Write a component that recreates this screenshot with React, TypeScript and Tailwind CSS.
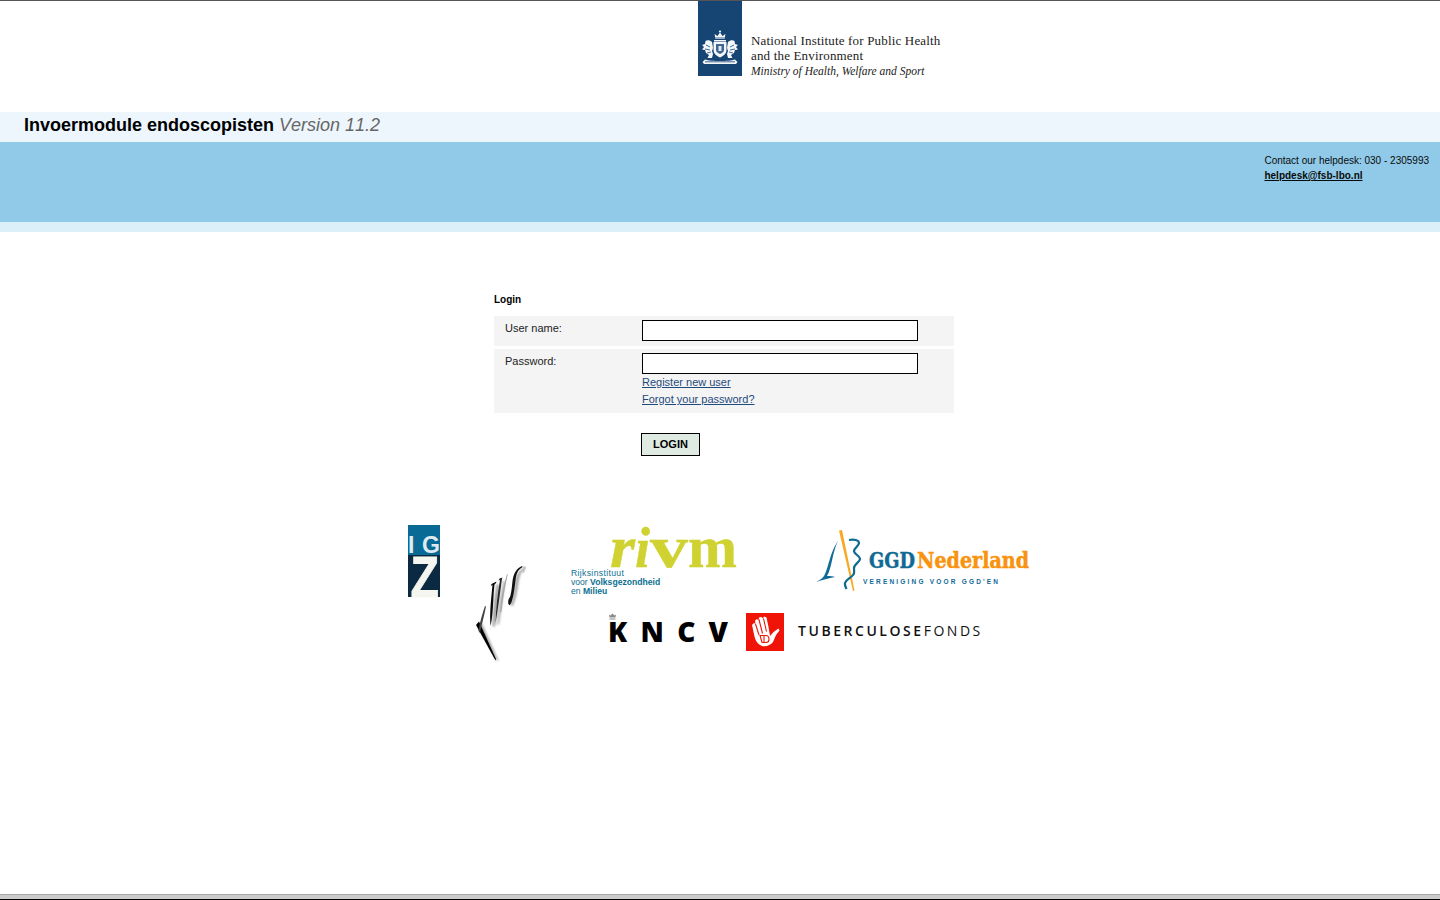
import React from "react";

const Crest = () => (
  <svg width="44" height="75" viewBox="0 0 44 75" className="block">
    <rect width="44" height="75" fill="#164473" />
    <g fill="#f4f7fa">
      <path d="M17.500 38l-1-5 3 2 2.500-3.500 2.500 3.500 3-2-1 5z" />
      <circle cx="22" cy="30.500" r="1.100" />
      <path d="M16 39h12v1.500H16z" />
      <path d="M15.500 41h13v8c0 4-3.500 6-6.500 7.500-3-1.500-6.500-3.500-6.500-7.500z" />
      <path d="M14 41c-2-2-5-2-6.500-1l-.5 3-3 1 2 2-2 2.500 3 .5 1 3 3 2-1.500 3h4.500l1-4-1-3 1-3z" />
      <path d="M30 41c2-2 5-2 6.500-1l.5 3 3 1-2 2 2 2.500-3 .5-1 3-3 2 1.500 3h-4.500l-1-4 1-3-1-3z" />
      <path d="M7 58.500c6 2 24 2 30 0l2.500 2.500-1.500 2H6l-1.500-2z" />
    </g>
    <g stroke="#164473" strokeWidth="0.800" fill="none">
      <path d="M8 44l4 2M7 48l5 1M9 52l4-1M36 44l-4 2M37 48l-5 1M35 52l-4-1" />
      <path d="M7 60.800h30" />
      <path d="M17.500 37l9 0" />
    </g>
    <path d="M18 43h8v6c0 2-2 3-4 4-2-1-4-2-4-4z" fill="#3f6590" />
    <path d="M20.500 45h3v5h-3z" fill="#dfe7ef" />
  </svg>
);

const Vws = () => (
  <svg width="54" height="98" viewBox="0 0 54 98" className="block overflow-visible">
    <defs>
      <filter id="vwsBlur" x="-30%" y="-30%" width="160%" height="160%">
        <feGaussianBlur stdDeviation="1.300" />
      </filter>
    </defs>
    <g fill="#a4a4a4" filter="url(#vwsBlur)" transform="translate(2.500 1.500)">
      <path d="M4 56l17 38-2 0L1 62z" />
      <path d="M15 60c0-14 2-30 4-42l2.500 0c0 14-2 30-4 42z" />
      <path d="M20 58c1-14 3-30 6-44l1.500 1c-2 14-4 30-6 43z" />
      <path d="M33 38c3-6 4-16 5-24 1-6 4-11 9-13l1 1c-5 3-6 8-7 14-1 8-3 18-6 24z" />
    </g>
    <path d="M1 60l3-3.500L21 94l-.5 1.500z" fill="#000" />
    <path d="M3.500 66C5 56 7.500 48 10 41l1 .5C9.500 50 7 58 5 68z" fill="#444444" />
    <path d="M15.500 61c-1-13 .5-26 2-41l-1.500 1 .5-2 5-2.500-.5 1.500-1.500 1.500c-1 8-1 14-1.500 21-.5 8-1 14-2.500 20.500z" fill="#080808" />
    <path d="M20.500 58c.5-14 2-29 4.500-43l-1.500.5 1-2 3-1-.5 1.500c-2 14-4 30-6.500 44z" fill="#2a2a2a" />
    <path d="M25 47c1-13 3-26 7-38l.8.5c-3 12-5 25-6.500 38z" fill="#a8a8a8" />
    <path d="M33.500 39c-1-3 .5-6 1.500-7 2-6 2-14 3-19 1-5 4-10 9-12l.5 1c-5 3-6 7-6.800 12-1 8-2 18-4.500 24-1 2-2.200 3-2.700 1z" fill="#111111" />
    <path d="M47 1l4 1-2 6-2-1c1-2 1-4 0-6z" fill="#c4c4c4" />
  </svg>
);

const Igz = () => (
  <svg width="32" height="72" viewBox="0 0 32 72" className="block overflow-visible">
    <rect width="32" height="30" fill="#0a6a96" />
    <rect y="30" width="32" height="42" fill="#0b2a41" />
    <text x="0" y="28" fill="#dfeaf0" fontFamily="'Liberation Sans', sans-serif" fontWeight="700" fontSize="23">I</text>
    <text x="14" y="28" fill="#dfeaf0" fontFamily="'Liberation Sans', sans-serif" fontWeight="700" fontSize="23">G</text>
    <text x="2.500" y="72" fill="#f6f6f0" stroke="#f6f6f0" strokeWidth="0.800" fontFamily="'Liberation Sans', sans-serif" fontWeight="700" fontSize="58" textLength="28.500" lengthAdjust="spacingAndGlyphs">Z</text>
  </svg>
);

const Rivm = () => (
  <svg width="166" height="69" viewBox="0 0 166 69" className="block overflow-visible">
    <g fill="#cfd231" stroke="#cfd231" strokeWidth="0.400" fontFamily="'Liberation Serif', serif" fontSize="60">
      <text x="39" y="38.500" fontStyle="italic" fontWeight="700" textLength="25" lengthAdjust="spacingAndGlyphs">r</text>
      <text x="64" y="38.500" fontStyle="italic" fontWeight="700" fontSize="56" textLength="15" lengthAdjust="spacingAndGlyphs">i</text>
      <text x="79" y="38.500" fontWeight="700" textLength="38" lengthAdjust="spacingAndGlyphs">v</text>
      <text x="117" y="38.500" fontWeight="700" textLength="49" lengthAdjust="spacingAndGlyphs">m</text>
    </g>
    <g fill="#0c6f91" fontFamily="'Liberation Sans', sans-serif" fontSize="8.600">
      <text x="0" y="48" letterSpacing="0.350">Rijksinstituut</text>
      <text x="0" y="57">voor <tspan fontWeight="700">Volksgezondheid</tspan></text>
      <text x="0" y="66">en <tspan fontWeight="700">Milieu</tspan></text>
    </g>
  </svg>
);

const Ggd = () => (
  <svg width="215" height="62" viewBox="0 0 215 62" className="block overflow-visible">
    <path d="M24 .500l3-.500 12.500 60.500-1.500.500z" fill="#f8a823" />
    <path d="M1 52c3-2 6-3 8-6 4-6 6-24 14-35-6 12-6 27-11 35 3 0 6 0 8 1-6 1-13 3-19 5z" fill="#0f6a94" />
    <path d="M34 10c5-1 10 0 10 3 0 3-5 5-5 8s6 5 6 8-6 5-6 9 1 5-1 7c-2 3-7 4-8 8-.5 2 .5 4 1.500 6" fill="none" stroke="#0f6a94" strokeWidth="2.200" />
    <text x="54" y="38" fill="#0f6a94" stroke="#0f6a94" strokeWidth="0.500" fontFamily="'DejaVu Serif', serif" fontWeight="700" fontSize="23" textLength="46" lengthAdjust="spacingAndGlyphs">GGD</text>
    <text x="102" y="38" fill="#f9930d" stroke="#f9930d" strokeWidth="0.500" fontFamily="'DejaVu Serif', serif" fontWeight="700" fontSize="23" textLength="112" lengthAdjust="spacingAndGlyphs">Nederland</text>
    <text x="48" y="54" fill="#0f6a94" fontFamily="'Liberation Sans', sans-serif" fontWeight="700" fontSize="6.500" textLength="135">VERENIGING VOOR GGD'EN</text>
  </svg>
);

const Kncv = () => (
  <svg width="120" height="38" viewBox="0 0 120 38" className="block overflow-visible">
    <path d="M1.500 4.500L1 1.500l1.500 1L4.500 .500l2 2 1.500-1-.5 3z" fill="#8a8a8a" />
    <path d="M1.500 6h6" stroke="#8a8a8a" strokeWidth="1" />
    <text x="0" y="29" fill="#000" fontFamily="'Open Sans', 'Liberation Sans', sans-serif" fontWeight="800" fontSize="28" textLength="120">KNCV</text>
  </svg>
);

const Hand = () => (
  <svg width="38" height="38" viewBox="0 0 38 38" className="block">
    <rect width="38" height="38" fill="#f01408" />
    <path d="M6 12l2-2 1.500 1L9 7.500l2-1.500 1.500 1.500L13 4.500 15.500 4l1.500 1.500L18 3.500l2.500 1 2 9.500 1.500 9 3.500-4 5-3.500 1 2-3.500 4.500-3 7c-2 3-7 5-11 4-4-1.500-6.500-5-7.500-9.500z" fill="#fff" />
    <g stroke="#f01408" strokeWidth="1.100" fill="none">
      <path d="M9.500 11l3.500 11M13 6.500l3.500 14M17.500 5.500l3 13" />
      <path d="M14 22.500h6c2 0 3 2 3 4s-1 3-3 3h-4z" />
      <path d="M18 22.500v7" />
    </g>
  </svg>
);

export default function App() {
  return (
    <div className="flex h-[900px] flex-col overflow-hidden bg-white font-['Liberation_Sans',Arial,sans-serif] text-black">
      <header className="h-[112px] border-t border-[#555555] pl-[698px]">
        <div className="flex items-start">
          <Crest />
          <div className="ml-[9px] pt-[32px] font-['Liberation_Serif',serif] text-[13px] leading-[15px] text-[#222222]">
            <div className="tracking-[0.17px] whitespace-nowrap">National Institute for Public Health</div>
            <div className="tracking-[0.17px] whitespace-nowrap">and the Environment</div>
            <div className="pt-[1px] text-[11.500px] italic whitespace-nowrap">Ministry of Health, Welfare and Sport</div>
          </div>
        </div>
      </header>

      <div className="h-[30px] bg-[#eef6fd] pl-[24px] text-[18px] leading-[26px]">
        <b className="font-bold">Invoermodule endoscopisten</b>{" "}
        <i className="text-[#666666] [font-kerning:none]">Version 11.2</i>
      </div>

      <div className="flex h-[80px] justify-end bg-[#90cae8] pt-[11px] pr-[11px] text-[10px] leading-[15px] text-[#0a0a0a]">
        <div className="whitespace-nowrap">
          <div>Contact our helpdesk: 030 - 2305993</div>
          <a href="#" className="font-bold underline">helpdesk@fsb-lbo.nl</a>
        </div>
      </div>
      <div className="h-[10px] bg-[#dcf0fa]" />

      <main className="pl-[494px]">
        <div className="mt-[62px] text-[10px] leading-[12px] font-bold">Login</div>
        <div className="mt-[10px] flex h-[30px] w-[460px] bg-[#f4f4f4] pt-[4px]">
          <div className="w-[148px] pl-[11px] text-[11px] leading-[16px] text-[#222222]">User name:</div>
          <input className="h-[21px] w-[276px] border border-black bg-white" aria-label="User name" />
        </div>
        <div className="mt-[3px] flex h-[64px] w-[460px] bg-[#f4f4f4] pt-[4px]">
          <div className="w-[148px] pl-[11px] text-[11px] leading-[16px] text-[#222222]">Password:</div>
          <div className="flex flex-col items-start">
            <input type="password" className="h-[21px] w-[276px] border border-black bg-white" aria-label="Password" />
            <a href="#" className="text-[11px] leading-[17px] text-[#1f4a7c] underline">Register new user</a>
            <a href="#" className="text-[11px] leading-[17px] text-[#1f4a7c] underline">Forgot your password?</a>
          </div>
        </div>
        <button className="mt-[20px] ml-[147px] block h-[23px] w-[59px] border border-black bg-[#dfeae3] pb-[2px] text-[11px] leading-[18px] font-bold text-black">LOGIN</button>
      </main>

      <section className="mt-[69px] flex items-start pl-[408px]">
        <Igz />
        <div className="mt-[40px] ml-[35px]"><Vws /></div>
        <div className="mt-[3px] ml-[42px]">
          <div className="flex items-start">
            <Rivm />
            <div className="mt-[2px] ml-[78px]"><Ggd /></div>
          </div>
          <div className="mt-[16px] ml-[37px] flex items-start">
            <Kncv />
            <div className="ml-[18px]"><Hand /></div>
            <div className="ml-[14px] pt-[9px] text-[14px] leading-[18px] tracking-[2.540px] font-['Open_Sans',sans-serif] whitespace-nowrap text-[#111111]">
              <span className="font-semibold">TUBERCULOSE</span><span>FONDS</span>
            </div>
          </div>
        </div>
      </section>

      <div className="mt-auto h-[6px] border-t border-b border-t-[#a8a8a8] border-b-black bg-[#cccccc]" />
    </div>
  );
}
